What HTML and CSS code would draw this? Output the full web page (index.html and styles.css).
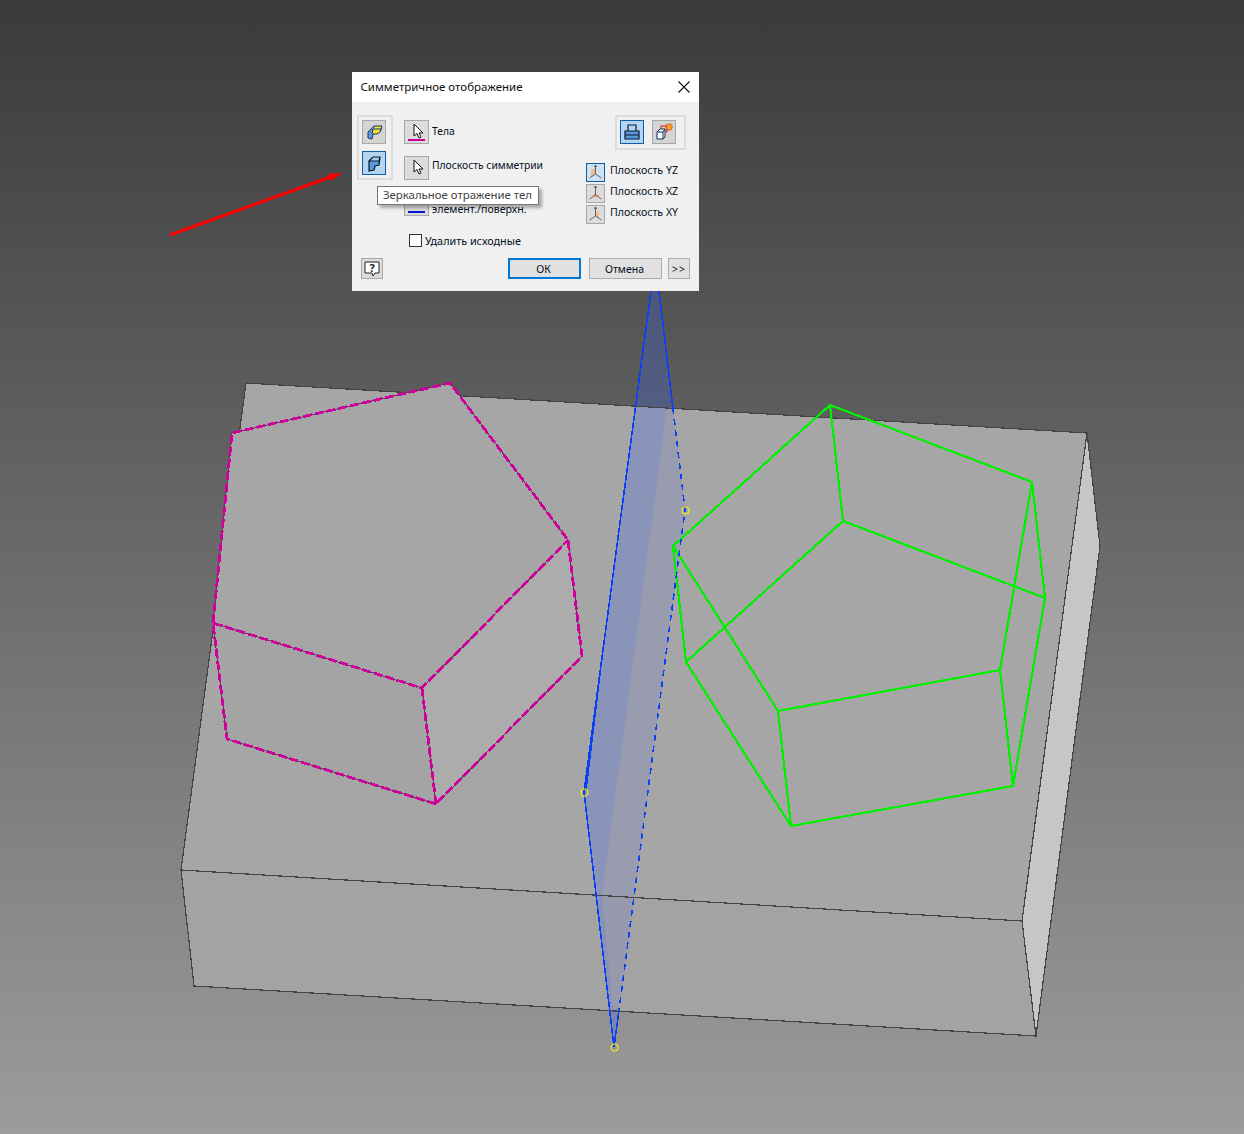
FILE: index.html
```html
<!DOCTYPE html>
<html lang="ru">
<head>
<meta charset="utf-8">
<title>Симметричное отображение</title>
<link rel="stylesheet" href="styles.css">
</head>
<body>
<main class="scene">
  <svg class="model" width="1244" height="1134" viewBox="0 0 1244 1134">
    <polygon class="face-top" points="246,383 1087,433 1022,921 181,870"/>
    <polygon class="face-front" points="181,870 1022,921 1036,1036 194,986"/>
    <polygon class="face-side" points="1087,433 1100,546 1036,1036 1022,921"/>
    <polygon class="plane-strong" points="651,291 659,291 672.9,408 635.6,406"/>
    <polygon class="plane-strong" points="635.6,406 667,408 602,895 613,1011 609.6,1010 584,792"/>
    <polygon class="plane-weak" points="667,408 672.9,408 685,510 618.9,1011 613,1011 602,895"/>
    <polygon class="plane-strong" points="609.6,1010 618.9,1011 614,1047"/>
    <polyline class="edge" points="246,383 1087,433 1022,921 181,870 246,383"/>
    <polyline class="edge" points="181,870 194,986 1036,1036 1022,921"/>
    <polyline class="edge" points="1087,433 1100,546 1036,1036"/>
    <polygon class="solid-top" points="232,433 450,383 568,540 422,688 213,623"/>
    <polygon class="solid-side" points="568,540 582,656 436,804 422,688"/>
    <polygon class="solid-front" points="213,623 422,688 436,804 227,739"/>
    <g class="magenta-under">
      <polyline points="213,623 232,433 450,383 568,540 582,656 436,804 227,739 213,623 422,688 568,540"/>
      <line x1="422" y1="688" x2="436" y2="804"/>
    </g>
    <g class="magenta">
      <polyline points="213,623 232,433 450,383 568,540 582,656 436,804 227,739 213,623 422,688 568,540"/>
      <line x1="422" y1="688" x2="436" y2="804"/>
    </g>
    <g class="green">
      <polygon points="830,405 1032,482 1045,598 843,521"/>
      <polyline points="830,405 673,546 686,662 843,521"/>
      <polyline points="673,546 778,711 1000,670 1032,482"/>
      <polyline points="686,662 791,826 1013,786 1045,598"/>
      <line x1="778" y1="711" x2="791" y2="826"/>
      <line x1="1000" y1="670" x2="1013" y2="786"/>
    </g>
    <g class="blue">
      <polyline points="651,291 584,792 614,1047"/>
      <line x1="659" y1="291" x2="672.9" y2="408"/>
      <line x1="601" y1="665" x2="586" y2="790"/>
      <line x1="618.9" y1="1011" x2="614" y2="1047"/>
    </g>
    <polyline class="blue-dash" points="672.9,408 685,510 618.9,1011"/>
    <g class="points">
      <circle cx="685.5" cy="510.5" r="3.5"/>
      <circle cx="584.5" cy="792.5" r="3.5"/>
      <circle cx="614.5" cy="1047.5" r="3.5"/>
    </g>
    <line class="arrow-shaft" x1="170" y1="235" x2="333" y2="176"/>
    <polygon class="arrow-head" points="342,173 328,174 331,181"/>
  </svg>

  <section class="dialog">
    <header class="titlebar">
      <span class="title">Симметричное отображение</span>
      <svg class="close" width="12" height="12" viewBox="0 0 12 12"><path d="M.5.5l11 11M11.500.5l-11 11"/></svg>
    </header>
    <div class="content">
      <div class="main">
        <div class="group modes">
          <button class="tool">
            <svg width="18" height="18" viewBox="0 0 18 18"><path class="i-blue" d="M3 9l6-6h2L8 10l-1 6-4-1z"/><path class="i-yellow" d="M8 6l3-3h6l-2 6-3 2H7z"/><path class="i-line" d="M3 9l6-6h8l-2 6-3 2H8l-1 5-4-1zM8 6h9M8 6l-1 5"/></svg>
          </button>
          <button class="tool on">
            <svg width="18" height="18" viewBox="0 0 18 18"><path class="i-blue" d="M4 7l4-4h7l-1 8-4 1-1 4-5 1z"/><path class="i-pale" d="M8 3h7l-1 4H4z"/><path class="i-dark" d="M4 7l4-4h7l-1 8-4 1-1 4-5 1zM4 7h10l1-4"/></svg>
          </button>
        </div>
        <div class="inputs">
          <div class="pick-row">
            <button class="pick">
              <svg width="16" height="18" viewBox="0 0 16 18"><path class="i-cursor" d="M5 1v12l3-2.500L10 15l2-1-2-4h4z"/></svg>
              <i class="swatch magenta-swatch"></i>
            </button>
            <span class="label">Тела</span>
          </div>
          <div class="pick-row">
            <button class="pick">
              <svg width="16" height="18" viewBox="0 0 16 18"><path class="i-cursor" d="M5 1v12l3-2.500L10 15l2-1-2-4h4z"/></svg>
            </button>
            <span class="label label-high">Плоскость симметрии</span>
          </div>
          <div class="pick-row">
            <button class="pick">
              <i class="swatch blue-swatch"></i>
            </button>
            <span class="label label-low">элемент./поверхн.</span>
          </div>
        </div>
        <div class="side">
          <div class="group ops">
            <button class="tool on">
              <svg width="18" height="18" viewBox="0 0 18 18"><path class="i-blue" d="M2 8h14v8H2z"/><path class="i-dark" d="M5 2h8v6h3v8H2V8h3zM5 8h8M2 12h14"/></svg>
            </button>
            <button class="tool">
              <svg width="20" height="20" viewBox="0 0 20 20"><path class="i-white" d="M3 10l3-3h5v8l-2 2H3z"/><path class="i-navy" d="M3 10l3-3h5v8l-2 2H3zM3 10h6v7M9 10l2-3"/><path class="i-redline" d="M7 7V4h6v6h-2"/><path class="i-star" d="M15 1l1 2 2-1-1 2 2 1-2 1 1 2-2-1-1 2-1-2-2 1 1-2-2-1 2-1-1-2 2 1z"/></svg>
            </button>
          </div>
          <ul class="planes">
            <li class="plane-row">
              <button class="axis on">
                <svg width="17" height="17" viewBox="0 0 17 17"><path class="i-orange" d="M4 6l4-2v6l-4 3z"/><path class="i-axis" d="M8.500 1v9M7 3l1.500-2L10 3M8.500 10l-6 4M8.500 10l6 4"/></svg>
              </button>
              <span class="plane-name">Плоскость YZ</span>
            </li>
            <li class="plane-row">
              <button class="axis">
                <svg width="17" height="17" viewBox="0 0 17 17"><path class="i-orange" d="M8.500 8l4 2.500-4 2.500-4-2.500z"/><path class="i-axis" d="M8.500 1v9M7 3l1.500-2L10 3M8.500 10l-6 4M8.500 10l6 4"/></svg>
              </button>
              <span class="plane-name">Плоскость XZ</span>
            </li>
            <li class="plane-row">
              <button class="axis">
                <svg width="17" height="17" viewBox="0 0 17 17"><path class="i-orange" d="M9 5l3 2v6l-3-3z"/><path class="i-axis" d="M8.500 1v9M7 3l1.500-2L10 3M8.500 10l-6 4M8.500 10l6 4"/></svg>
              </button>
              <span class="plane-name">Плоскость XY</span>
            </li>
          </ul>
        </div>
      </div>
      <label class="check-row"><i class="check"></i><span class="label check-text">Удалить исходные</span></label>
      <footer class="footer">
        <button class="help">
          <svg width="18" height="18" viewBox="0 0 18 18"><path class="i-bubble" d="M2 2h14v11h-4l-2 3-1-3H2z"/><text class="help-mark" x="9" y="11.500">?</text></svg>
        </button>
        <button class="btn default">ОК</button>
        <button class="btn">Отмена</button>
        <button class="btn more">&gt;&gt;</button>
      </footer>
    </div>
    <div class="tooltip">Зеркальное отражение тел</div>
  </section>
</main>
</body>
</html>
```

FILE: styles.css
```css
* { box-sizing: border-box; }
html, body { margin: 0; padding: 0; }
body { font-family: "Noto Sans", "Open Sans", sans-serif; }

.scene {
  position: relative;
  width: 1244px;
  height: 1134px;
  overflow: hidden;
  background: linear-gradient(#3a3a3a, #9c9c9c);
}
.model { display: block; }
.face-top { fill: #a6a6a6; }
.face-front { fill: #a3a3a3; }
.face-side { fill: #c6c6c6; }
.solid-top { fill: #a6a6a6; }
.solid-front { fill: #a4a4a4; }
.solid-side { fill: #acacac; }
.plane-strong { fill: rgb(54, 94, 238); fill-opacity: .25; }
.plane-weak { fill: rgb(54, 94, 238); fill-opacity: .12; }
.edge { fill: none; stroke: #444; stroke-width: 1.2; shape-rendering: crispEdges; }
.magenta-under polyline, .magenta-under line { fill: none; stroke: #4a4a4a; stroke-width: 1; shape-rendering: crispEdges; }
.magenta polyline, .magenta line { fill: none; stroke: #d0009c; stroke-width: 2.8; stroke-dasharray: 9 3; shape-rendering: crispEdges; }
.green polygon, .green polyline, .green line { fill: none; stroke: #00f000; stroke-width: 2.2; shape-rendering: crispEdges; }
.blue polyline, .blue line { fill: none; stroke: #0a40f5; stroke-width: 1.6; shape-rendering: crispEdges; }
.blue-dash { fill: none; stroke: #0a40f5; stroke-width: 1.6; stroke-dasharray: 6 5; shape-rendering: crispEdges; }
.points circle { fill: none; stroke: #f5ea10; stroke-width: 1.2; }
.arrow-shaft { stroke: #ff0000; stroke-width: 3; }
.arrow-head { fill: #ff0000; }

.dialog {
  position: absolute;
  left: 352px;
  top: 72px;
  width: 347px;
  height: 219px;
  display: flex;
  flex-direction: column;
  background: #f0f0f0;
  color: #05101f;
}
.titlebar {
  height: 30px;
  flex: none;
  display: flex;
  align-items: center;
  justify-content: space-between;
  padding: 0 9px 1px 8.500px;
  background: #fff;
}
.title { font-size: 11.500px; color: #111; }
.close path { fill: none; stroke: #111; stroke-width: 1.100; }

.content { flex: 1; display: flex; flex-direction: column; }
.main { display: flex; height: 132px; padding: 13px 13px 0 5px; }
button { padding: 0; margin: 0; font: inherit; color: inherit; display: flex; align-items: center; justify-content: center; }

.group { border: 2px solid #dcdcdc; }
.modes {
  width: 36px;
  height: 65px;
  display: flex;
  flex-direction: column;
  gap: 7px;
  padding: 3px;
  flex: none;
}
.tool {
  width: 24px;
  height: 24px;
  flex: none;
  background: #d4d4d4;
  border: 1px solid #a8a8a8;
}
.tool.on { background: #b4d4f0; border: 1px solid #0a5ea8; }

.inputs { margin-left: 11px; padding-top: 5px; display: flex; flex-direction: column; gap: 12px; width: 150px; flex: none; }
.pick-row { display: flex; align-items: center; gap: 3px; height: 24px; }
.pick {
  position: relative;
  width: 25px;
  height: 24px;
  flex: none;
  background: #dcdcdc;
  border: 1px solid #a8a8a8;
}
.swatch { position: absolute; left: 3px; right: 3px; bottom: 2px; height: 2px; }
.magenta-swatch { background: #cc0099; }
.blue-swatch { background: #0018c8; }
.label { font-size: 10.300px; line-height: 14px; white-space: nowrap; padding-bottom: 3px; }
.label-high { padding-bottom: 7px; }
.label-low { padding: 10px 0 0; font-size: 10.600px; }

.side { margin-left: auto; width: 100px; display: flex; flex-direction: column; align-items: flex-end; }
.ops { width: 71px; height: 35px; display: flex; gap: 8px; padding: 3px; }
.planes { list-style: none; margin: 13px 0 0; padding: 0; width: 100%; display: flex; flex-direction: column; gap: 2px; }
.plane-row { display: flex; gap: 5px; height: 19px; }
.axis { width: 19px; height: 19px; flex: none; background: #dcdcdc; border: 1px solid #a8a8a8; }
.axis.on { background: #cfe2f3; border-color: #0a5ea8; }
.plane-name { font-size: 10.600px; line-height: 14px; white-space: nowrap; }

.check-row { display: flex; align-items: center; gap: 3px; height: 13px; margin-left: 57px; }
.check { width: 13px; height: 13px; flex: none; background: #fff; border: 1px solid #333; }
.check-row .check-text { padding: 0; font-size: 10.800px; }

.footer { display: flex; margin-top: 11px; height: 21px; padding: 0 9px; }
.help { width: 22px; height: 21px; background: #dcdcdc; border: 1px solid #a8a8a8; margin-right: 125px; }
.btn { width: 73px; height: 21px; font-size: 10.500px; background: #e1e1e1; border: 1px solid #adadad; margin-right: 8px; padding-right: 2px; }
.btn.default { border: 2px solid #0078d7; }
.btn.more { width: 22px; margin: 0 0 0 -2px; padding: 0; letter-spacing: 1px; }

.tooltip {
  position: absolute;
  left: 25px;
  top: 114px;
  width: 162px;
  height: 19px;
  padding-left: 5px;
  font-size: 11.400px;
  line-height: 15px;
  white-space: nowrap;
  color: #444;
  background: #fff;
  border: 1px solid #767676;
  box-shadow: 3px 3px 3px rgba(0, 0, 0, .3);
}

.i-blue { fill: #5b9bd8; }
.i-pale { fill: #a9cdee; }
.i-yellow { fill: #f7df3a; }
.i-line { fill: none; stroke: #14365c; stroke-width: 1; }
.i-dark { fill: none; stroke: #06182e; stroke-width: 1.200; }
.i-cursor { fill: #fff; stroke: #111; stroke-width: 1; }
.i-white { fill: #fff; }
.i-navy { fill: none; stroke: #0a2a5e; stroke-width: 1; }
.i-redline { fill: none; stroke: #d81818; stroke-width: 1; }
.i-star { fill: #f8a020; stroke: #d04010; stroke-width: .5; }
.i-orange { fill: #f4b88c; }
.i-axis { fill: none; stroke: #444; stroke-width: .8; }
.i-bubble { fill: #fff; stroke: #222; stroke-width: 1; }
.help-mark { font-size: 11px; font-weight: 700; text-anchor: middle; fill: #222; }
```
